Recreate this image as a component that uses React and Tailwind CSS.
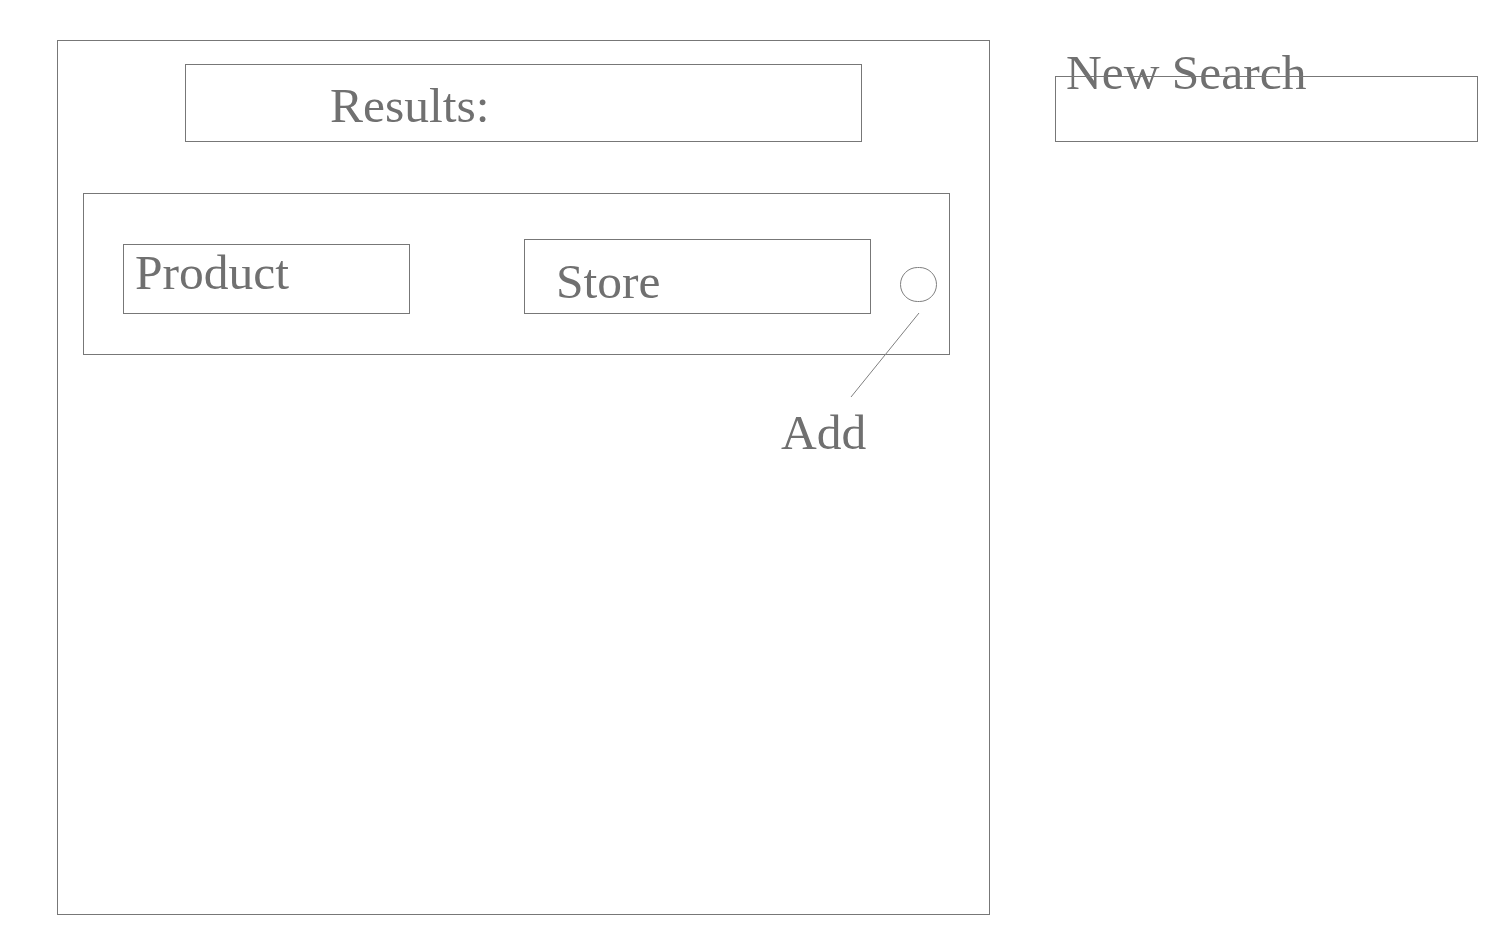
export default function App() {
  const serif = { fontFamily: '"Liberation Serif", "Times New Roman", serif' };
  return (
    <div className="min-h-[931px] w-[1508px] bg-white pt-[40px] pl-[57px] flex items-start text-[#707070]" style={serif}>
      {/* Left panel */}
      <div className="relative w-[933px] h-[875px] border border-[#777777] flex flex-col items-start">
        <div className="ml-[127px] mt-[23px] w-[677px] h-[78px] border border-[#777777] pl-[144px] pt-[16px]">
          <div className="text-[49.5px] leading-none">Results:</div>
        </div>
        <div className="ml-[25px] mt-[51px] w-[867px] h-[162px] border border-[#777777] flex items-start">
          <div className="ml-[39px] mt-[50px] w-[287px] h-[70px] border border-[#777777] pl-[11px] pt-[3px]">
            <div className="text-[49.5px] leading-none">Product</div>
          </div>
          <div className="ml-[114px] mt-[45px] w-[347px] h-[75px] border border-[#777777] pl-[31px] pt-[17px]">
            <div className="text-[49.5px] leading-none">Store</div>
          </div>
          <div className="ml-[29px] mt-[73px] w-[37px] h-[35px] rounded-full border border-[#808080]" />
        </div>
        <div className="ml-[723px] mt-[53px] text-[49.5px] leading-none">Add</div>
        <svg className="absolute left-0 top-0 pointer-events-none" width="933" height="875">
          <line x1="861" y1="272" x2="793" y2="356" stroke="#808080" strokeWidth="1" />
        </svg>
      </div>
      {/* Right panel */}
      <div className="ml-[65px] flex flex-col items-start">
        <div className="mt-[8px] ml-[11px] text-[49.5px] leading-none h-[50px]">New Search</div>
        <div className="mt-[-22px] w-[423px] h-[66px] border border-[#777777]" />
      </div>
    </div>
  );
}
